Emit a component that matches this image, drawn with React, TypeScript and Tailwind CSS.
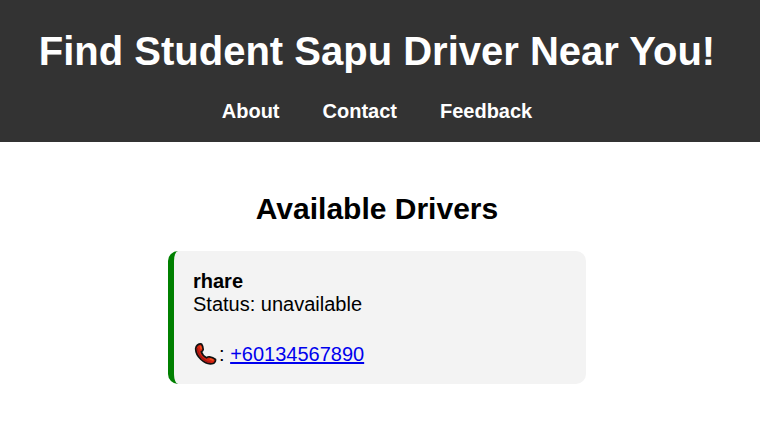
const links = ["About", "Contact", "Feedback"];

function Phone() {
  return (
    <svg viewBox="0 0 26 24" className="h-6 w-[26px]" aria-hidden="true">
      <path
        d="M4.500 3 Q6.500 1.500 8.500 2 Q10.200 4.500 10.200 7.500 Q10 9 8.300 9.800 Q9.500 13.800 13.500 15.800 Q15 14.600 16.500 14.800 Q20 15.200 22.500 17.500 Q22.800 20 20.800 21.200 Q14.500 23.500 8 17.500 Q2.500 12 2.700 6.500 Q3 4.200 4.500 3 Z"
        fill="#d3220f"
        stroke="#111"
        strokeWidth="1.7"
        strokeLinejoin="round"
      />
      <path d="M4.400 6 Q4.400 11 9 16 Q13 20 17.500 20.600" fill="none" stroke="#a01515" strokeWidth="1.2" />
      <path d="M7.300 4 L8.400 7.300 M16.700 16.800 L20.500 18.300" fill="none" stroke="#f4511e" strokeWidth="1.6" />
    </svg>
  );
}

export default function App() {
  return (
    <div className="font-['Liberation_Sans',Arial,sans-serif] text-xl leading-6 text-black">
      <header className="bg-[#333] pt-6 pr-[26px] pb-[19px] pl-5 text-center text-white">
        <h1 className="text-[40px] leading-[54px] font-bold">Find Student Sapu Driver Near You!</h1>
        <nav className="mt-[21px] flex justify-center gap-[43px]">
          {links.map((l) => (
            <a key={l} href="#" className="font-bold">
              {l}
            </a>
          ))}
        </nav>
      </header>
      <main className="px-5 pt-[49px] pr-[26px]">
        <h2 className="text-center text-[30px] leading-9 font-bold">Available Drivers</h2>
        <section className="mx-auto mt-6 w-full max-w-[418px] rounded-[10px] border-l-[6px] border-[#008000] bg-[#f3f3f3] px-[19px] pt-[19px] pb-[18px]">
          <h3 className="leading-[23px] font-bold">rhare</h3>
          <p className="leading-[23px]">Status: unavailable</p>
          <div className="mt-[26px] flex items-center">
            <Phone />
            <p>
              : <a href="tel:+60134567890" className="text-[#0000ee] underline decoration-2">+60134567890</a>
            </p>
          </div>
        </section>
      </main>
    </div>
  );
}
